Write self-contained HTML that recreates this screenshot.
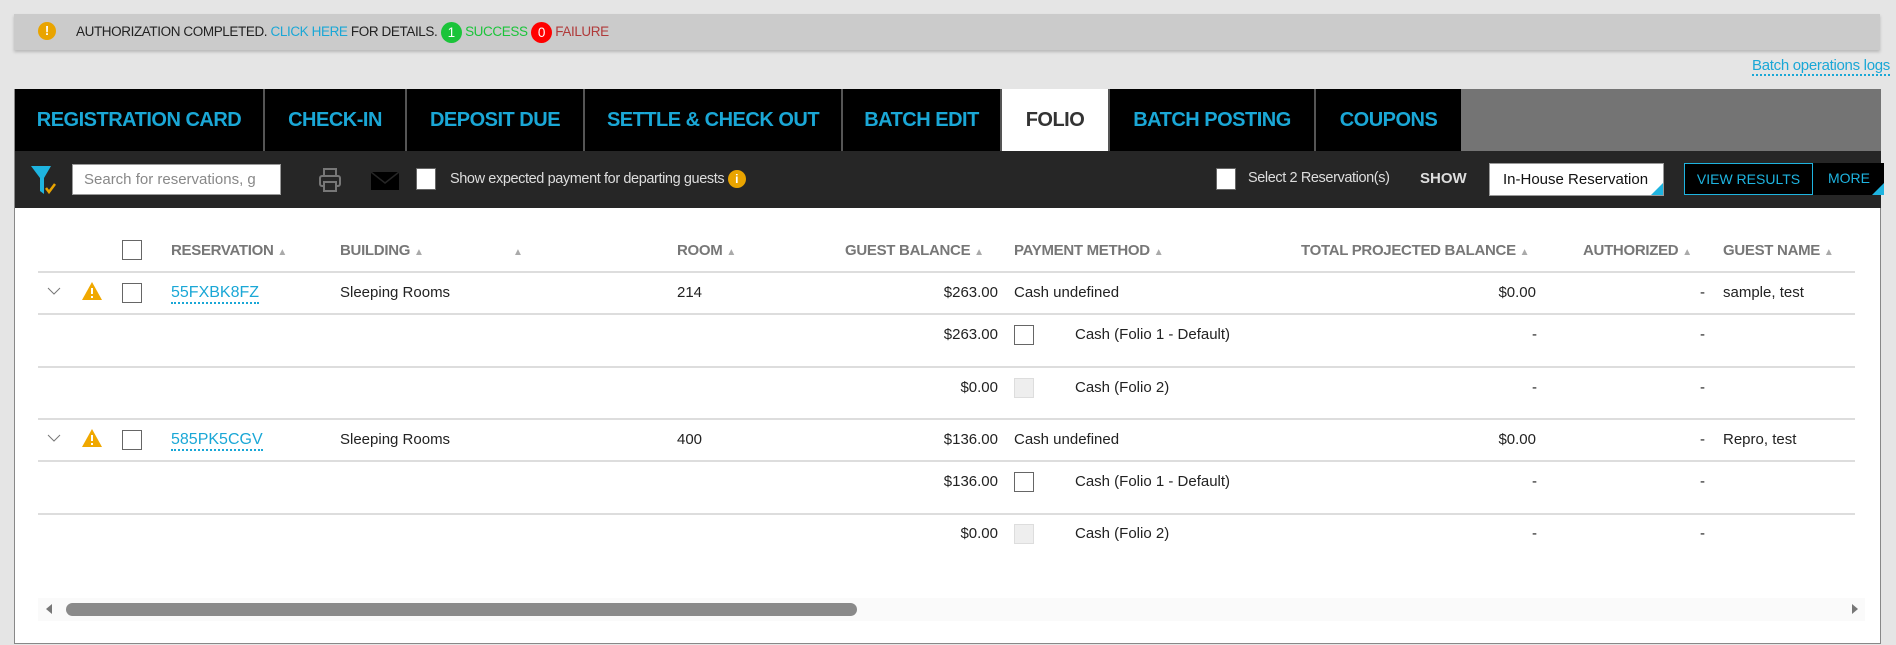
<!DOCTYPE html>
<html><head><meta charset="utf-8"><style>
*{box-sizing:border-box;margin:0;padding:0}
body{width:1896px;height:645px;background:#e5e5e5;font-family:"Liberation Sans",sans-serif;position:relative;overflow:hidden;color:#222}
.a{position:absolute;white-space:nowrap}
.banner{left:14px;top:14px;width:1866px;height:36px;background:#cbcbcb;box-shadow:0 2px 3px rgba(0,0,0,.2)}
.panel{left:14px;top:89px;width:1867px;height:555px;background:#fff;border:1px solid #888}
.tabs{left:15px;top:89px;width:1866px;height:62px;background:#747474}
.tab{position:absolute;top:0;height:62px;background:#000;color:#1aa7d6;font-weight:bold;font-size:20px;line-height:62px;text-align:center;letter-spacing:-0.5px;border-right:2px solid #555}
.tool{left:15px;top:151px;width:1866px;height:57px;background:#262626}
.hd{font-size:15px;font-weight:bold;color:#777;top:242px;letter-spacing:-0.3px}
.s{font-size:10px;color:#aaa;letter-spacing:0}
.t{font-size:15px;color:#222}
.line{position:absolute;left:38px;width:1817px;height:2px;background:#ddd}
.cb{position:absolute;width:20px;height:20px;border:1px solid #666;background:#fff}
.r{text-align:right}
.link{color:#1aa7d6;border-bottom:2px dotted #1aa7d6;padding-bottom:1px}
.bd{display:inline-block;width:21px;height:21px;border-radius:50%;color:#fff;text-align:center;line-height:21px;vertical-align:middle}
</style></head><body>
<div class="a banner"></div>
<div class="a" style="left:38px;top:22px;width:18px;height:18px;border-radius:50%;background:#e9a400;color:#fff;font-weight:bold;font-size:13px;text-align:center;line-height:18px">!</div>
<div class="a" style="left:76px;top:20px;font-size:13.5px;letter-spacing:-0.4px;line-height:24px">AUTHORIZATION COMPLETED. <span style="color:#1aa7d6">CLICK HERE</span> FOR DETAILS. <span class="bd" style="background:#1bc43a">1</span> <span style="color:#1bc43a">SUCCESS</span> <span class="bd" style="background:#f00">0</span> <span style="color:#b03a3a">FAILURE</span></div>
<div class="a" style="right:6px;top:57px;font-size:15px;color:#1aa7d6;border-bottom:2px dotted #1aa7d6;letter-spacing:-0.3px">Batch operations logs</div>
<div class="a panel"></div>
<div class="a tabs">
<div class="tab" style="left:0;width:250px">REGISTRATION CARD</div>
<div class="tab" style="left:250px;width:142px">CHECK-IN</div>
<div class="tab" style="left:392px;width:178px">DEPOSIT DUE</div>
<div class="tab" style="left:570px;width:258px">SETTLE &amp; CHECK OUT</div>
<div class="tab" style="left:828px;width:159px">BATCH EDIT</div>
<div class="tab" style="left:987px;width:108px;background:#fff;color:#333;border-right:2px solid #555">FOLIO</div>
<div class="tab" style="left:1095px;width:206px">BATCH POSTING</div>
<div class="tab" style="left:1301px;width:145px;border-right:none">COUPONS</div>
</div>
<div class="a tool"></div>
<svg class="a" style="left:29px;top:164px" width="32" height="34" viewBox="0 0 32 34"><path d="M2 2h20l-7 12v16l-4-3V14z" fill="#1eb4e0"/><path d="M17 24l3 4 6-8" stroke="#e9a400" stroke-width="2.5" fill="none"/></svg>
<div class="a" style="left:72px;top:164px;width:209px;height:31px;background:#fff;border:1px solid #999;font-size:15px;color:#888;line-height:29px;padding-left:11px;overflow:hidden">Search for reservations, g</div>
<svg class="a" style="left:318px;top:167px" width="24" height="26" viewBox="0 0 24 26"><rect x="6" y="2" width="12" height="7" fill="none" stroke="#777" stroke-width="2"/><rect x="2" y="9" width="20" height="10" rx="2" fill="none" stroke="#777" stroke-width="2"/><rect x="6" y="15" width="12" height="9" fill="#262626" stroke="#777" stroke-width="2"/></svg>
<svg class="a" style="left:371px;top:172px" width="28" height="18" viewBox="0 0 28 18"><rect width="28" height="18" fill="#000"/><path d="M0 0l14 11L28 0" stroke="#262626" stroke-width="1.5" fill="none"/></svg>
<div class="cb" style="left:416px;top:168px;width:20px;height:22px"></div>
<div class="a" style="left:450px;top:169px;font-size:14.5px;color:#ddd;letter-spacing:-0.4px;line-height:20px">Show expected payment for departing guests <span style="display:inline-block;width:18px;height:18px;border-radius:50%;background:#e9a400;color:#fff;font-size:12px;font-weight:bold;text-align:center;line-height:18px;vertical-align:middle;letter-spacing:0">i</span></div>
<div class="cb" style="left:1216px;top:168px;width:20px;height:22px"></div>
<div class="a" style="left:1248px;top:170px;font-size:14.5px;color:#ddd;letter-spacing:-0.4px">Select 2 Reservation(s)</div>
<div class="a" style="left:1420px;top:170px;font-size:15px;color:#ddd;font-weight:bold">SHOW</div>
<div class="a" style="left:1489px;top:163px;width:175px;height:33px;background:#fff;border:1px solid #999;font-size:15px;line-height:31px;padding-left:13px;overflow:hidden;color:#111">In-House Reservation<div style="position:absolute;right:0;bottom:0;border-left:12px solid transparent;border-bottom:12px solid #1eb4e0"></div></div>
<div class="a" style="left:1684px;top:163px;width:129px;height:32px;border:1px solid #1eb4e0;background:#000;color:#1eb4e0;font-size:14px;text-align:center;line-height:30px">VIEW RESULTS</div>
<div class="a" style="left:1813px;top:163px;width:71px;height:32px;background:#000;color:#1eb4e0;font-size:14px;padding-left:15px;line-height:30px">MORE<div style="position:absolute;right:0;bottom:0;border-left:12px solid transparent;border-bottom:12px solid #1eb4e0"></div></div>

<div class="cb" style="left:122px;top:240px"></div>
<div class="a hd" style="left:171px">RESERVATION <span class="s">&#9650;</span></div>
<div class="a hd" style="left:340px">BUILDING <span class="s">&#9650;</span></div>
<div class="a hd" style="left:513px"><span class="s">&#9650;</span></div>
<div class="a hd" style="left:677px">ROOM <span class="s">&#9650;</span></div>
<div class="a hd" style="left:845px">GUEST BALANCE <span class="s">&#9650;</span></div>
<div class="a hd" style="left:1014px">PAYMENT METHOD <span class="s">&#9650;</span></div>
<div class="a hd" style="left:1301px">TOTAL PROJECTED BALANCE <span class="s">&#9650;</span></div>
<div class="a hd" style="left:1583px">AUTHORIZED <span class="s">&#9650;</span></div>
<div class="a hd" style="left:1723px">GUEST NAME <span class="s">&#9650;</span></div>
<div class="line" style="top:271px"></div>

<!-- row 1 -->
<svg class="a" style="left:47px;top:286px" width="14" height="10"><path d="M1 2l6 6 6-6" stroke="#777" fill="none"/></svg>
<svg class="a" style="left:81px;top:281px" width="22" height="20"><path d="M11 1L21 19H1z" fill="#f0a800"/><path d="M11 7v6M11 15v2" stroke="#fff" stroke-width="2"/></svg>
<div class="cb" style="left:122px;top:283px"></div>
<div class="a t" style="left:171px;top:284px"><span class="link" style="font-size:16px">55FXBK8FZ</span></div>
<div class="a t" style="left:340px;top:284px">Sleeping Rooms</div>
<div class="a t" style="left:677px;top:284px">214</div>
<div class="a t r" style="right:898px;top:284px">$263.00</div>
<div class="a t" style="left:1014px;top:284px">Cash undefined</div>
<div class="a t r" style="right:360px;top:284px">$0.00</div>
<div class="a t" style="left:1700px;top:284px">-</div>
<div class="a t" style="left:1723px;top:284px">sample, test</div>
<div class="line" style="top:313px"></div>
<div class="a t r" style="right:898px;top:326px">$263.00</div>
<div class="cb" style="left:1014px;top:325px"></div>
<div class="a t" style="left:1075px;top:326px">Cash (Folio 1 - Default)</div>
<div class="a t" style="left:1532px;top:326px">-</div>
<div class="a t" style="left:1700px;top:326px">-</div>
<div class="line" style="top:366px"></div>
<div class="a t r" style="right:898px;top:379px">$0.00</div>
<div class="cb" style="left:1014px;top:378px;background:#eee;border-color:#ddd"></div>
<div class="a t" style="left:1075px;top:379px">Cash (Folio 2)</div>
<div class="a t" style="left:1532px;top:379px">-</div>
<div class="a t" style="left:1700px;top:379px">-</div>
<div class="line" style="top:418px"></div>

<!-- row 2 -->
<svg class="a" style="left:47px;top:433px" width="14" height="10"><path d="M1 2l6 6 6-6" stroke="#777" fill="none"/></svg>
<svg class="a" style="left:81px;top:428px" width="22" height="20"><path d="M11 1L21 19H1z" fill="#f0a800"/><path d="M11 7v6M11 15v2" stroke="#fff" stroke-width="2"/></svg>
<div class="cb" style="left:122px;top:430px"></div>
<div class="a t" style="left:171px;top:431px"><span class="link" style="font-size:16px">585PK5CGV</span></div>
<div class="a t" style="left:340px;top:431px">Sleeping Rooms</div>
<div class="a t" style="left:677px;top:431px">400</div>
<div class="a t r" style="right:898px;top:431px">$136.00</div>
<div class="a t" style="left:1014px;top:431px">Cash undefined</div>
<div class="a t r" style="right:360px;top:431px">$0.00</div>
<div class="a t" style="left:1700px;top:431px">-</div>
<div class="a t" style="left:1723px;top:431px">Repro, test</div>
<div class="line" style="top:460px"></div>
<div class="a t r" style="right:898px;top:473px">$136.00</div>
<div class="cb" style="left:1014px;top:472px"></div>
<div class="a t" style="left:1075px;top:473px">Cash (Folio 1 - Default)</div>
<div class="a t" style="left:1532px;top:473px">-</div>
<div class="a t" style="left:1700px;top:473px">-</div>
<div class="line" style="top:513px"></div>
<div class="a t r" style="right:898px;top:525px">$0.00</div>
<div class="cb" style="left:1014px;top:524px;background:#eee;border-color:#ddd"></div>
<div class="a t" style="left:1075px;top:525px">Cash (Folio 2)</div>
<div class="a t" style="left:1532px;top:525px">-</div>
<div class="a t" style="left:1700px;top:525px">-</div>

<div class="a" style="left:38px;top:598px;width:1827px;height:23px;background:#fafafa"></div>
<div class="a" style="left:46px;top:604px;border-right:6px solid #777;border-top:5px solid transparent;border-bottom:5px solid transparent"></div>
<div class="a" style="left:66px;top:603px;width:791px;height:13px;border-radius:7px;background:#8a8a8a"></div>
<div class="a" style="left:1852px;top:604px;border-left:6px solid #777;border-top:5px solid transparent;border-bottom:5px solid transparent"></div>
</body></html>
